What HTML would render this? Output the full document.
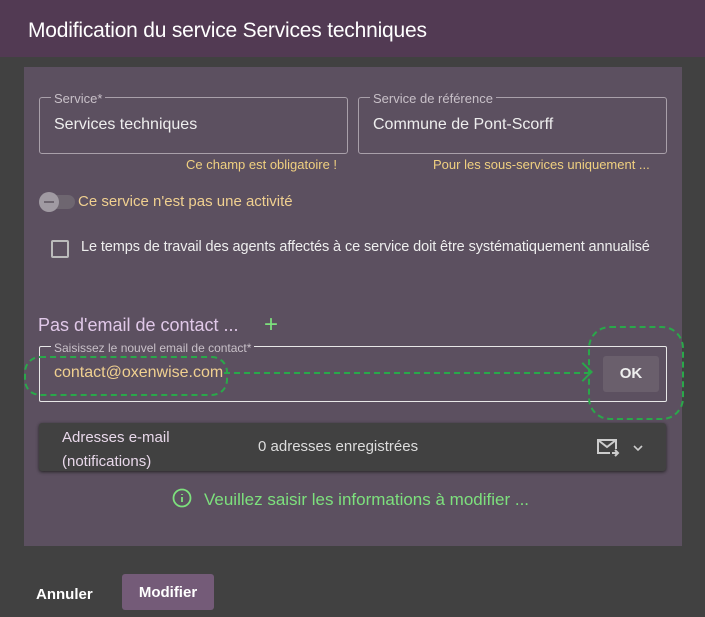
<!DOCTYPE html><html><head><style>
body{margin:0;width:705px;height:617px;background:#414141;font-family:"Liberation Sans Narrow","Liberation Sans",sans-serif;position:relative;overflow:hidden;color:#eee}
.a{position:absolute;white-space:nowrap}
.hdr{left:0;top:0;width:705px;height:57px;background:#523a53}
.panel{left:24px;top:67px;width:658px;height:479px;background:#5c5060}
.f{border:1px solid #a9a0aa;border-radius:3px}
.lbl{font-size:13px;color:#c8c0c8;background:#5c5060;padding:0 3px}
</style></head><body>
<div class="a hdr"></div>
<div class="a" style="left:28px;top:19px;font-size:21px;color:#fff;letter-spacing:-0.2px">Modification du service Services techniques</div>
<div class="a panel"></div>
<div class="a f" style="left:39px;top:97px;width:307px;height:55px"></div>
<div class="a lbl" style="left:51px;top:91px">Service*</div>
<div class="a" style="left:54px;top:116px;font-size:16px">Services techniques</div>
<div class="a f" style="left:358px;top:97px;width:307px;height:55px"></div>
<div class="a lbl" style="left:370px;top:91px">Service de référence</div>
<div class="a" style="left:373px;top:116px;font-size:16px">Commune de Pont-Scorff</div>
<div class="a" style="left:186px;top:157px;font-size:13px;color:#f0d080">Ce champ est obligatoire !</div>
<div class="a" style="left:433px;top:157px;font-size:13px;color:#f0d080">Pour les sous-services uniquement ...</div>
<div class="a" style="left:39px;top:195px;width:36px;height:14px;border-radius:7px;background:#6e6670"></div>
<div class="a" style="left:39px;top:192px;width:20px;height:20px;border-radius:50%;background:#a09aa2"></div>
<div class="a" style="left:44px;top:201px;width:10px;height:2px;background:#6e6670"></div>
<div class="a" style="left:78px;top:193px;font-size:15px;color:#f0d090">Ce service n'est pas une activité</div>
<div class="a" style="left:51px;top:240px;width:14px;height:14px;border:2px solid #bbb;border-radius:2px"></div>
<div class="a" style="left:81px;top:239px;font-size:14.5px;letter-spacing:-0.1px">Le temps de travail des agents affectés à ce service doit être systématiquement annualisé</div>
<div class="a" style="left:38px;top:315px;font-size:18px;color:#e0c8e8">Pas d'email de contact ...</div>
<div class="a" style="left:264px;top:311px;font-size:24px;color:#7de07d">+</div>
<div class="a" style="left:39px;top:346px;width:626px;height:54px;border:1px solid #e8e8e8;border-radius:2px"></div>
<div class="a lbl" style="left:51px;top:341px;font-size:12px">Saisissez le nouvel email de contact*</div>
<div class="a" style="left:54px;top:364px;font-size:16px;color:#f0d090">contact@oxenwise.com</div>
<div class="a" style="left:603px;top:356px;width:56px;height:36px;background:#6a5f6c;border-radius:3px;text-align:center;line-height:36px;font-size:15px;font-weight:bold">OK</div>
<div class="a" style="left:24px;top:356px;width:200px;height:36px;border:2px dashed #2aa84a;border-radius:16px"></div>
<div class="a" style="left:224px;top:372px;width:366px;border-top:2px dashed #2aa84a"></div>
<div class="a" style="left:576px;top:365px;width:12px;height:12px;border-right:2px solid #2aa84a;border-top:2px solid #2aa84a;transform:rotate(45deg)"></div>
<div class="a" style="left:588px;top:326px;width:92px;height:90px;border:2px dashed #2aa84a;border-radius:22px"></div>
<div class="a" style="left:39px;top:423px;width:627px;height:48px;background:#414141;border-radius:3px;box-shadow:0 1px 3px #222"></div>
<div class="a" style="left:62px;top:426px;font-size:15px;line-height:24px;color:#e8d8ea">Adresses e-mail<br>(notifications)</div>
<div class="a" style="left:258px;top:438px;font-size:15px;color:#ddd">0 adresses enregistrées</div>
<svg class="a" style="left:596px;top:438px" width="24" height="20" viewBox="0 0 24 20" fill="none" stroke="#ccc" stroke-width="2"><path d="M14 15H2V2h18v9M2 2l9 7 9-7M16 15h6M19 12l3 3-3 3"/></svg>
<svg class="a" style="left:632px;top:444px" width="12" height="8" viewBox="0 0 12 8" fill="none" stroke="#ccc" stroke-width="1.6"><path d="M2 2l4 4 4-4"/></svg>
<svg class="a" style="left:172px;top:488px" width="20" height="20" viewBox="0 0 20 20" fill="none" stroke="#7de07d" stroke-width="1.8"><circle cx="10" cy="10" r="8.5"/><path d="M10 9v5M10 6v1"/></svg>
<div class="a" style="left:204px;top:490px;font-size:17px;color:#7de07d">Veuillez saisir les informations à modifier ...</div>
<div class="a" style="left:36px;top:586px;font-size:15px;font-weight:bold;color:#fff">Annuler</div>
<div class="a" style="left:122px;top:574px;width:92px;height:36px;background:#745b78;border-radius:3px;text-align:center;line-height:38px;font-size:15px;font-weight:bold;color:#fff">Modifier</div>
</body></html>
